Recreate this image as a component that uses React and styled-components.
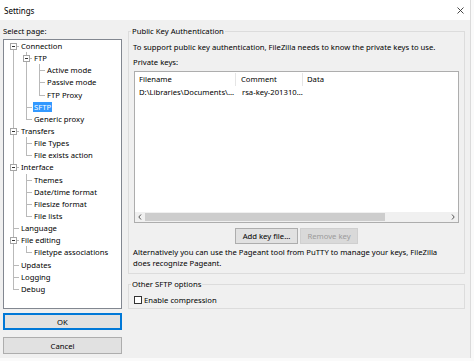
import React from 'react';
import styled, { createGlobalStyle } from 'styled-components';

const GlobalStyle = createGlobalStyle`
  html, body { margin: 0; padding: 0; background: #fafafa; }
  body {
    font-family: "Noto Sans", "Liberation Sans", sans-serif;
    font-size: 7.7px;
    color: #000;
  }
  * { box-sizing: border-box; }
`;

const INDENT = 13;
const LINE = 9;
const ROW = 12.15;

const tree = [
  { label: 'Connection', children: [
    { label: 'FTP', children: [
      { label: 'Active mode' },
      { label: 'Passive mode' },
      { label: 'FTP Proxy' },
    ] },
    { label: 'SFTP', selected: true },
    { label: 'Generic proxy' },
  ] },
  { label: 'Transfers', children: [
    { label: 'File Types' },
    { label: 'File exists action' },
  ] },
  { label: 'Interface', children: [
    { label: 'Themes' },
    { label: 'Date/time format' },
    { label: 'Filesize format' },
    { label: 'File lists' },
  ] },
  { label: 'Language' },
  { label: 'File editing', children: [
    { label: 'Filetype associations' },
  ] },
  { label: 'Updates' },
  { label: 'Logging' },
  { label: 'Debug' },
];

const Window = styled.div`
  width: 471px;
  height: 358px;
  display: flex;
  flex-direction: column;
  background: #f0f0f0;
  border-right: 1px solid #dadada;
  overflow: hidden;
`;

const TitleBar = styled.div`
  height: 20px;
  flex: none;
  background: #fff;
  display: flex;
  align-items: center;
  justify-content: space-between;
  padding: 0 6px 0 4px;
  font-size: 8px;
`;

const Body = styled.div`
  flex: 1;
  display: flex;
  gap: 6px;
  padding: 5px 2px 0 3px;
`;

const LeftColumn = styled.div`
  width: 119px;
  flex: none;
  display: flex;
  flex-direction: column;
`;

const Caption = styled.div`
  line-height: 12px;
  height: 12px;
`;

const TreeBox = styled.div`
  margin-top: 2px;
  height: 270px;
  background: #fff;
  border: 1px solid #828790;
  overflow: hidden;
`;

const Branch = styled.ul`
  list-style: none;
  margin: 0;
  padding: 0 0 0 ${p => (p.$root ? 0 : INDENT)}px;
`;

const Node = styled.li`
  position: relative;

  &::before {
    content: '';
    position: absolute;
    left: ${LINE}px;
    top: ${ROW / 2}px;
    width: 6px;
    border-top: 1px solid #b9b9b9;
  }

  &::after {
    content: '';
    position: absolute;
    left: ${LINE}px;
    top: ${p => (p.$root && p.$first ? ROW / 2 : 0)}px;
    ${p => (p.$last ? `height: ${ROW / 2 - (p.$root && p.$first ? ROW / 2 : 0)}px;` : 'bottom: 0;')}
    border-left: 1px solid #b9b9b9;
  }
`;

const Row = styled.div`
  position: relative;
  height: ${ROW}px;
  line-height: ${ROW}px;
  padding-left: 17px;
  white-space: nowrap;
`;

const Expander = styled.span`
  position: absolute;
  z-index: 1;
  left: ${LINE - 3}px;
  top: ${ROW / 2 - 3}px;
  width: 7px;
  height: 7px;
  background: #fff;
  border: 1px solid #a5a5a5;

  &::after {
    content: '';
    position: absolute;
    left: 1px;
    top: 2px;
    width: 3px;
    border-top: 1px solid #333;
  }
`;

const Label = styled.span`
  padding: 0 1px;
  margin-left: -1px;
  background: ${p => (p.$selected ? '#3399ff' : 'transparent')};
  color: ${p => (p.$selected ? '#fff' : '#000')};
`;

const Button = styled.div`
  height: ${p => p.$h || 16}px;
  width: ${p => (p.$w ? `${p.$w}px` : 'auto')};
  display: flex;
  align-items: center;
  justify-content: center;
  background: ${p => (p.$disabled ? '#d9d9d9' : '#e1e1e1')};
  color: ${p => (p.$disabled ? '#9b9b9b' : '#000')};
  border: 1px solid ${p => (p.$focus ? '#0078d7' : p.$disabled ? '#cfcfcf' : '#adadad')};
  box-shadow: ${p => (p.$focus ? 'inset 0 0 0 1px #0078d7' : 'none')};
  margin-top: ${p => p.$mt || 0}px;
`;

const RightColumn = styled.div`
  flex: 1;
  display: flex;
  flex-direction: column;
  padding-right: 3px;
`;

const Group = styled.fieldset`
  margin: ${p => p.$mt || 0}px 0 0 0;
  padding: 0 4px ${p => p.$pb || 0}px 4px;
  border: 1px solid #dcdcdc;
  min-width: 0;
`;

const Legend = styled.legend`
  padding: 0 1px;
  margin-left: -2px;
  line-height: 12px;
`;

const Text = styled.div`
  line-height: ${p => p.$lh || 12}px;
  margin-top: ${p => p.$mt || 0}px;
`;

const ListBox = styled.div`
  margin: 3px 0 0 1px;
  height: 152px;
  width: 325px;
  background: #fff;
  border: 1px solid #adadad;
  display: flex;
  flex-direction: column;
`;

const HeaderRow = styled.div`
  display: flex;
  height: 15px;
  align-items: center;
`;

const HeaderCell = styled.div`
  width: ${p => (p.$w ? `${p.$w}px` : 'auto')};
  flex: ${p => (p.$w ? 'none' : 1)};
  height: 13px;
  line-height: 13px;
  padding-left: ${p => p.$pl || 4}px;
  border-right: ${p => (p.$w ? '1px solid #e5e5e5' : 'none')};
`;

const DataRow = styled.div`
  display: flex;
  height: 10px;
  line-height: 10px;
`;

const DataCell = styled.div`
  width: ${p => p.$w}px;
  flex: none;
  padding-left: ${p => p.$pl || 4}px;
  white-space: nowrap;
`;

const Spacer = styled.div`
  flex: 1;
`;

const ScrollBar = styled.div`
  height: 10px;
  display: flex;
  background: #f0f0f0;
`;

const ScrollArrow = styled.div`
  width: 10px;
  display: flex;
  align-items: center;
  justify-content: center;
`;

const ScrollTrack = styled.div`
  flex: 1;
  display: flex;
  padding: 1px 0;
`;

const ScrollThumb = styled.div`
  height: 100%;
  background: #cdcdcd;
`;

const ButtonRow = styled.div`
  display: flex;
  justify-content: center;
  gap: 2px;
  margin-top: 5px;
`;

const CheckRow = styled.div`
  display: flex;
  align-items: center;
  gap: 2px;
  height: 12px;
  margin: 4px 0 0 1px;
`;

const CheckBox = styled.span`
  width: 8px;
  height: 8px;
  background: #fff;
  border: 1px solid #333;
`;

const Chevron = ({ dir }) => (
  <svg width="4" height="6" viewBox="0 0 4 6">
    <path
      d={dir === 'left' ? 'M3 0.5 L0.8 3 L3 5.5' : 'M1 0.5 L3.2 3 L1 5.5'}
      fill="none"
      stroke="#555"
      strokeWidth="1"
    />
  </svg>
);

const CloseIcon = () => (
  <svg width="7" height="7" viewBox="0 0 7 7">
    <path d="M0.5 0.5 L6.5 6.5 M6.5 0.5 L0.5 6.5" stroke="#333" strokeWidth="0.9" />
  </svg>
);

const TreeNodes = ({ nodes, root }) => (
  <Branch $root={root}>
    {nodes.map((n, i) => (
      <Node key={n.label} $root={root} $first={i === 0} $last={i === nodes.length - 1}>
        <Row>
          {n.children && <Expander />}
          <Label $selected={n.selected}>{n.label}</Label>
        </Row>
        {n.children && <TreeNodes nodes={n.children} />}
      </Node>
    ))}
  </Branch>
);

export default function App() {
  return (
    <>
      <GlobalStyle />
      <Window>
        <TitleBar>
          <span>Settings</span>
          <CloseIcon />
        </TitleBar>
        <Body>
          <LeftColumn>
            <Caption>Select page:</Caption>
            <TreeBox>
              <TreeNodes nodes={tree} root />
            </TreeBox>
            <Button $focus $h={17} $mt={4}>OK</Button>
            <Button $h={17} $mt={7}>Cancel</Button>
          </LeftColumn>
          <RightColumn>
            <Group $pb={4}>
              <Legend>Public Key Authentication</Legend>
              <Text $mt={4}>To support public key authentication, FileZilla needs to know the private keys to use.</Text>
              <Text $mt={3}>Private keys:</Text>
              <ListBox>
                <HeaderRow>
                  <HeaderCell $w={101}>Filename</HeaderCell>
                  <HeaderCell $w={67} $pl={5}>Comment</HeaderCell>
                  <HeaderCell>Data</HeaderCell>
                </HeaderRow>
                <DataRow>
                  <DataCell $w={101}>D:\Libraries\Documents\...</DataCell>
                  <DataCell $w={67} $pl={6}>rsa-key-201310...</DataCell>
                </DataRow>
                <Spacer />
                <ScrollBar>
                  <ScrollArrow><Chevron dir="left" /></ScrollArrow>
                  <ScrollTrack>
                    <ScrollThumb style={{ width: 240 }} />
                  </ScrollTrack>
                  <ScrollArrow><Chevron dir="right" /></ScrollArrow>
                </ScrollBar>
              </ListBox>
              <ButtonRow>
                <Button $w={63}>Add key file...</Button>
                <Button $w={58} $disabled>Remove key</Button>
              </ButtonRow>
              <Text $lh={11} $mt={3}>
                Alternatively you can use the Pageant tool from PuTTY to manage your keys, FileZilla
                <br />
                does recognize Pageant.
              </Text>
            </Group>
            <Group $mt={4} $pb={2}>
              <Legend>Other SFTP options</Legend>
              <CheckRow>
                <CheckBox />
                <span>Enable compression</span>
              </CheckRow>
            </Group>
          </RightColumn>
        </Body>
      </Window>
    </>
  );
}
